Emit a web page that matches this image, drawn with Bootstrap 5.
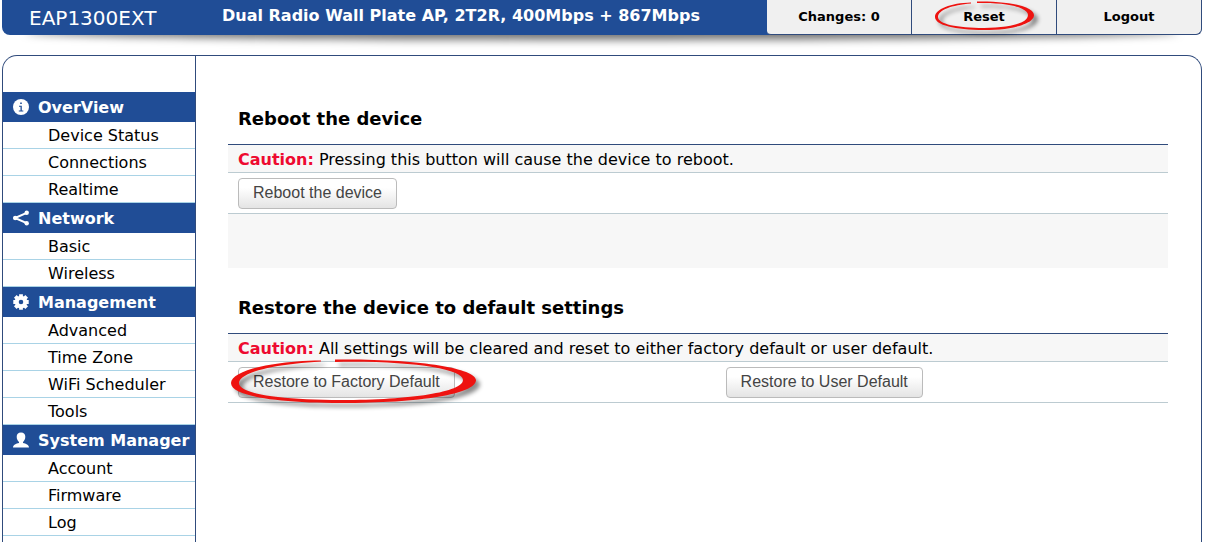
<!DOCTYPE html>
<html lang="en">
<head>
<meta charset="utf-8">
<meta name="viewport" content="width=device-width, initial-scale=1">
<title>EAP1300EXT - Reset</title>
<link href="https://cdn.jsdelivr.net/npm/bootstrap@5.3.0/dist/css/bootstrap.min.css" rel="stylesheet">
<style>
  :root { --brand: #204d96; --edge: #304b7c; }
  body { font-family: Verdana, "DejaVu Sans", sans-serif; font-size: 16px; line-height: 24px; color: #000; background: #fff; }
  a { color: inherit; text-decoration: none; }
  .page { padding: 0 3px 0 2px; }
  .topbar { height: 35px; background: var(--brand); border-radius: 0 0 8px 8px; }
  .topbar::after { content: ""; position: absolute; z-index: -1; left: 24px; right: 24px; bottom: 2px; height: 16px; border-radius: 50%; box-shadow: 0 7px 8px rgba(0, 0, 0, .55); }
  .model { font-size: 20px; width: 220px; padding-left: 27px; }
  .product { font-size: 16px; line-height: 32px; }
  .tabs { width: 435px; font-size: 13px; line-height: 34px; }
  .tabs a { background: #f0f0f0; border-right: 1px solid var(--edge); border-bottom: 1px solid var(--edge); }
  .tabs a:first-child { border-bottom-left-radius: 4px; }
  .tabs a:last-child { border-bottom-right-radius: 6px; }
  .panel { margin-top: 20px; border: 1px solid var(--edge); border-bottom: 0; border-radius: 15px 15px 0 0; }
  .sidebar { width: 193px; padding-top: 36px; border-right: 1px solid var(--edge); }
  .sidebar h2 { margin: 0; height: 30px; padding: 1px 0 0 10px; font-size: 16px; line-height: 30px; background: var(--brand); color: #fff; }
  .sidebar h2 svg { width: 16px; height: 16px; margin: 0 9px 1px 0; }
  .sidebar li a { display: block; height: 27px; padding: 1px 0 0 45px; line-height: 26px; border-bottom: 1px solid #a9d3e6; }
  .content { padding: 46px 33px 0 32px; }
  .block { margin-bottom: 23px; }
  .block h1 { margin: 0; padding: 5px 10px 13px; font-size: 18px; line-height: 24px; border-bottom: 1px solid var(--edge); }
  .line { padding: 0 10px; border-bottom: 1px solid #bccbd1; }
  .note { height: 28px; padding-top: 1px; line-height: 28px; background: #f7f7f7; }
  .note strong { color: #ee0a30; }
  .spacer { height: 54px; background: #f7f7f7; }
  .acts { height: 41px; padding-top: 5px; }
  .wide { width: 53%; }
  .push { height: 31px; padding: 0 14px 2px; font-family: "Liberation Sans", Arial, sans-serif; font-size: 16px; line-height: 26px; color: #444; border: 1px solid #bbb; border-radius: 4px; background: linear-gradient(#fff 30%, #e4e4e4); }
  .ring { position: absolute; pointer-events: none; overflow: visible; fill: #ee1310; filter: drop-shadow(4px 4px 2px rgba(0, 0, 0, .45)); }
  .ring-tab { left: 23px; top: 1px; width: 100px; height: 30px; }
  .ring-push { left: -7px; top: -8px; width: 246px; height: 46px; }
</style>
</head>
<body>
<div class="page d-flex flex-column min-vh-100">
  <header class="topbar d-flex position-relative">
    <div class="model text-white d-flex align-items-center flex-shrink-0">EAP1300EXT</div>
    <div class="product fw-bold text-white flex-grow-1 text-nowrap">Dual Radio Wall Plate AP, 2T2R, 400Mbps + 867Mbps</div>
    <nav class="tabs d-flex fw-bold text-center flex-shrink-0">
      <a href="#" class="w-100">Changes: 0</a>
      <a href="#" class="w-100 position-relative">Reset
        <svg class="ring ring-tab" viewBox="0 0 100 30" aria-hidden="true"><path d="M42 .5C76 0 99 6 99 14C99 23 77 29 49 29C20 29 0 24 0 16C0 8 16 2 36 1.500L36 2.500C17 4 3 9 3 16C3 23 22 27 49 27C75 27 93 22 93 14C93 7 74 1 42 2Z"/></svg>
      </a>
      <a href="#" class="w-100">Logout</a>
    </nav>
  </header>

  <div class="panel d-flex flex-grow-1">
    <nav class="sidebar flex-shrink-0">
      <h2 class="fw-bold d-flex align-items-center"><svg viewBox="0 0 16 16" aria-hidden="true"><circle cx="8" cy="8" r="8" fill="#fff"/><path d="M7.200 3.500h1.600v1.600H7.200zM6 6.700h2.800v4.700h1.500v1H5.800v-1h1.700V7.700H6z" fill="#204d96"/></svg>OverView</h2>
      <ul class="list-unstyled mb-0">
        <li><a href="#">Device Status</a></li>
        <li><a href="#">Connections</a></li>
        <li><a href="#">Realtime</a></li>
      </ul>
      <h2 class="fw-bold d-flex align-items-center"><svg viewBox="0 0 16 16" aria-hidden="true"><path d="M13.700 2.800L2 8l11.700 5.200" fill="none" stroke="#fff" stroke-width="2"/><g fill="#fff"><circle cx="13.700" cy="2.800" r="2.200"/><circle cx="2.200" cy="8" r="2.200"/><circle cx="13.700" cy="13.200" r="2.200"/></g></svg>Network</h2>
      <ul class="list-unstyled mb-0">
        <li><a href="#">Basic</a></li>
        <li><a href="#">Wireless</a></li>
      </ul>
      <h2 class="fw-bold d-flex align-items-center"><svg viewBox="0 0 16 16" aria-hidden="true"><g fill="none" stroke="#fff"><circle cx="8" cy="8" r="4.300" stroke-width="4"/><g stroke-width="3.800"><path d="M8 .3v3M8 12.700v3M.3 8h3M12.700 8h3M2.300 2.300l2 2M11.700 11.700l2 2M2.300 13.700l2-2M11.700 4.300l2-2"/></g></g></svg>Management</h2>
      <ul class="list-unstyled mb-0">
        <li><a href="#">Advanced</a></li>
        <li><a href="#">Time Zone</a></li>
        <li><a href="#">WiFi Scheduler</a></li>
        <li><a href="#">Tools</a></li>
      </ul>
      <h2 class="fw-bold d-flex align-items-center"><svg viewBox="0 0 16 16" aria-hidden="true"><path d="M8 .5c2.900 0 4.300 1.700 4.300 4.200 0 2.300-1 4.200-2.300 5.200v1.200c2.800.7 6 1.600 6 4.400H0c0-2.800 3.200-3.700 6-4.400V9.900C4.700 8.900 3.700 7 3.700 4.700 3.700 2.200 5.100.5 8 .5z" fill="#fff"/></svg>System Manager</h2>
      <ul class="list-unstyled mb-0">
        <li><a href="#">Account</a></li>
        <li><a href="#">Firmware</a></li>
        <li><a href="#">Log</a></li>
      </ul>
    </nav>

    <main class="content flex-grow-1">
      <section class="block">
        <h1 class="fw-bold">Reboot the device</h1>
        <div class="line note"><strong>Caution:</strong> Pressing this button will cause the device to reboot.</div>
        <div class="line acts"><button type="button" class="push">Reboot the device</button></div>
        <div class="spacer"></div>
      </section>
      <section class="block">
        <h1 class="fw-bold">Restore the device to default settings</h1>
        <div class="line note"><strong>Caution:</strong> All settings will be cleared and reset to either factory default or user default.</div>
        <div class="line acts d-flex">
          <div class="wide position-relative">
            <button type="button" class="push">Restore to Factory Default</button>
            <svg class="ring ring-push" viewBox="0 0 246 46" aria-hidden="true"><path d="M104 .5C185-.5 245 9 245 21C245 35 190 44 110 44C45 44 0 37 0 24C0 12 40 2 90 1.500L90 2.500C45 5 8 13 8 24C8 35 50 41 110 41C180 41 232 33 232 21C232 10 180 1.500 104 3Z"/></svg>
          </div>
          <div><button type="button" class="push">Restore to User Default</button></div>
        </div>
      </section>
    </main>
  </div>
</div>
<script src="https://cdn.jsdelivr.net/npm/bootstrap@5.3.0/dist/js/bootstrap.bundle.min.js"></script>
</body>
</html>
